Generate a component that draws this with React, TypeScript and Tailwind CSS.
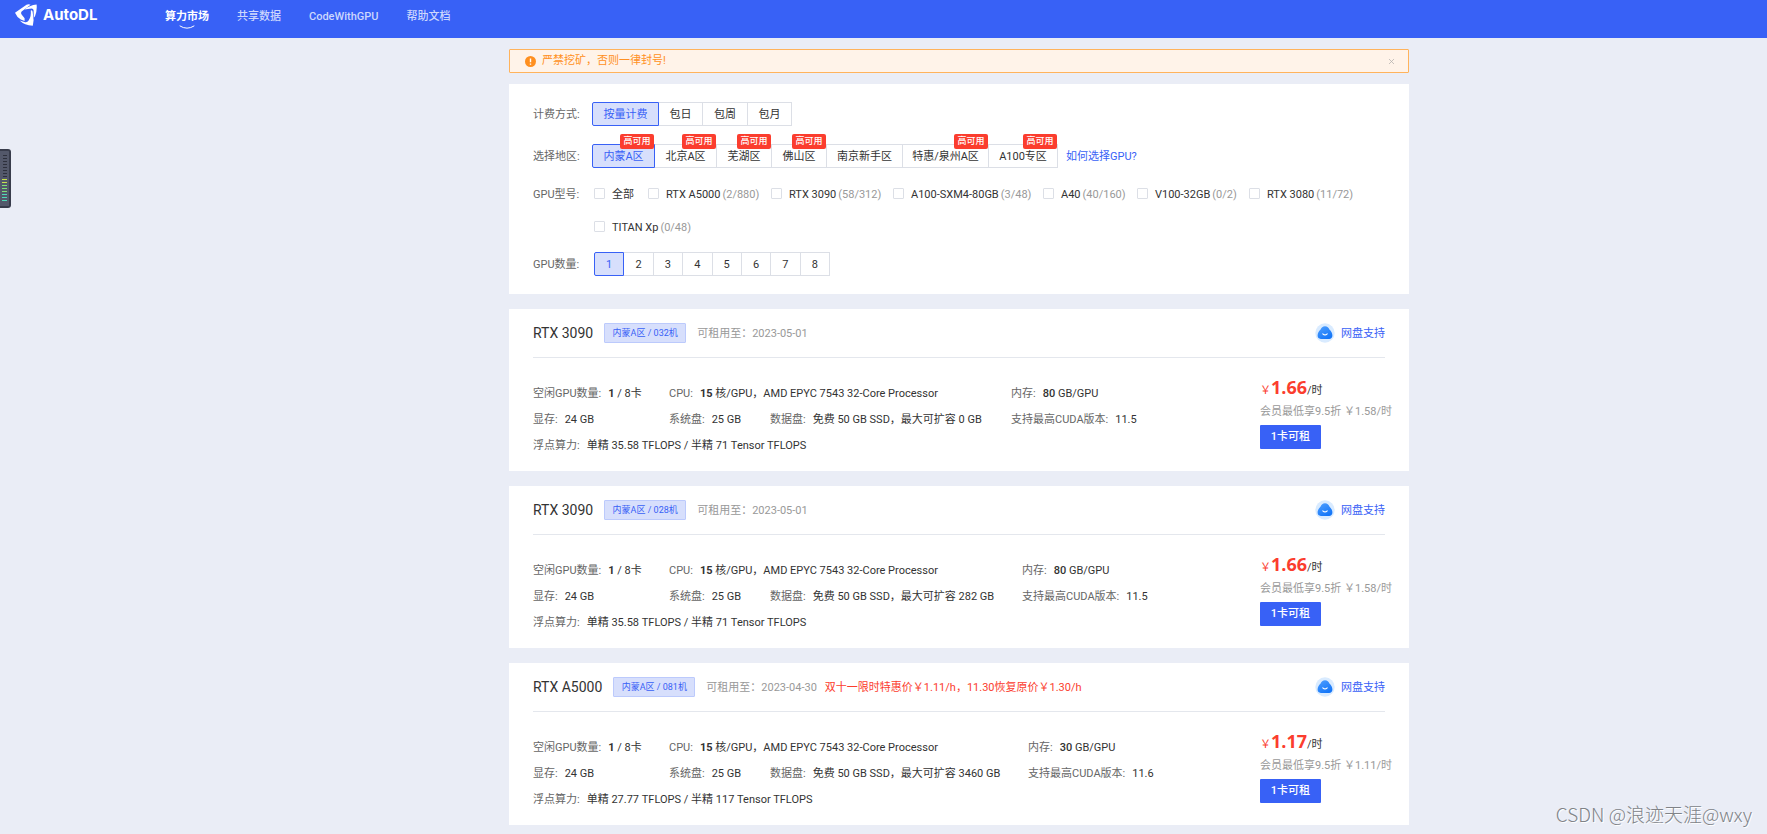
import { useState } from "react"
import { X } from "lucide-react"

const navItems = [
  { label: "算力市场", href: "#market", active: true },
  { label: "共享数据", href: "#data" },
  { label: "CodeWithGPU", href: "#code" },
  { label: "帮助文档", href: "#docs" },
]

const billingModes = [
  { label: "按量计费", width: "w-[67px]" },
  { label: "包日", width: "w-[44px]" },
  { label: "包周", width: "w-[45px]" },
  { label: "包月", width: "w-[44px]" },
]

const regions = [
  { label: "内蒙A区", width: "w-[63px]", hot: true },
  { label: "北京A区", width: "w-[62px]", hot: true },
  { label: "芜湖区", width: "w-[55px]", hot: true },
  { label: "佛山区", width: "w-[55px]", hot: true },
  { label: "南京新手区", width: "w-[76px]" },
  { label: "特惠/泉州A区", width: "w-[86px]", hot: true },
  { label: "A100专区", width: "w-[69px]", hot: true },
]

const gpuModels = [
  { label: "全部", count: "", width: "w-[54px]" },
  { label: "RTX A5000", count: "(2/880)", width: "w-[123px]" },
  { label: "RTX 3090", count: "(58/312)", width: "w-[122px]" },
  { label: "A100-SXM4-80GB", count: "(3/48)", width: "w-[150px]" },
  { label: "A40", count: "(40/160)", width: "w-[94px]" },
  { label: "V100-32GB", count: "(0/2)", width: "w-[112px]" },
  { label: "RTX 3080", count: "(11/72)", width: "w-[112px]" },
  { label: "TITAN Xp", count: "(0/48)", width: "w-[112px]" },
]

const machines = [
  {
    gpu: "RTX 3090",
    host: "内蒙A区 / 032机",
    until: "2023-05-01",
    promo: "",
    cpuCol: "w-[342px]",
    memory: "80",
    disk: "0 GB",
    cuda: "11.5",
    single: "35.58",
    half: "71",
    price: "1.66",
    member: "1.58",
  },
  {
    gpu: "RTX 3090",
    host: "内蒙A区 / 028机",
    until: "2023-05-01",
    promo: "",
    cpuCol: "w-[353px]",
    memory: "80",
    disk: "282 GB",
    cuda: "11.5",
    single: "35.58",
    half: "71",
    price: "1.66",
    member: "1.58",
  },
  {
    gpu: "RTX A5000",
    host: "内蒙A区 / 081机",
    until: "2023-04-30",
    promo: "双十一限时特惠价￥1.11/h，11.30恢复原价￥1.30/h",
    cpuCol: "w-[359px]",
    memory: "30",
    disk: "3460 GB",
    cuda: "11.6",
    single: "27.77",
    half: "117",
    price: "1.17",
    member: "1.11",
  },
]

type Machine = (typeof machines)[number]

function Logo() {
  return (
    <a href="#home" className="flex w-[150px] shrink-0 items-center gap-[6px] text-white">
      <svg width="22" height="22" viewBox="0 0 22 22" fill="#fff">
        <path d="M0 8.8 11.5 0.8Q13.4 0 15.6 0.7L6.6 7.6Q5.4 9 6.6 10.6L9.6 14.2V17L5.8 15.6Q2 13.4 0 8.8Z" />
        <path d="M9.4 5.4Q14.5 1.2 21.6 0.4 22.3 6.5 20 12.2L18.8 13.8 18.6 6.2Q18.4 4.4 16.6 4.4Z" />
        <path d="M15.8 6.4Q17.6 6 17.7 8L18.6 16.2 17.8 21.8Q9.5 21.5 4.6 16.6L10.2 18.2Q12.4 18.6 13.6 16.6 16.4 12.4 15.8 6.4Z" />
      </svg>
      <span className="font-[Inter,sans-serif] text-[15px] leading-[22px] font-bold">AutoDL</span>
    </a>
  )
}

function Options({ items, selected, onSelect, name }: {
  items: { label: string; width: string; hot?: boolean }[]
  selected: string
  onSelect: (label: string) => void
  name: string
}) {
  return (
    <div className="flex" role="group" aria-label={name}>
      {items.map((item) => (
        <button
          key={item.label}
          onClick={() => onSelect(item.label)}
          aria-pressed={item.label === selected}
          className={`relative h-6 shrink-0 border pt-[2px] whitespace-nowrap ${item.width} ${
            item.label === selected
              ? "rounded-l-[2px] border-[#3861f6] bg-[#d7dffc] text-[#3861f6]"
              : "border-l-0 border-[#dcdfe6] bg-white text-[#333]"
          }`}
        >
          {item.label}
          {item.hot && (
            <span className="absolute -top-[11px] right-0 z-10 h-[15px] w-[34px] rounded-[2px] bg-[#fb3d2e] text-[9px] leading-[15px] font-medium text-white">
              高可用
            </span>
          )}
        </button>
      ))}
    </div>
  )
}

function Field({ label, children }: { label: string; children: React.ReactNode }) {
  return (
    <span className="whitespace-nowrap text-[#333]">
      <span className="mr-[7px] text-[#666]">{label}:</span>
      {children}
    </span>
  )
}

function DiskIcon() {
  return (
    <svg width="20" height="20" viewBox="0 0 20 20">
      <defs>
        <linearGradient id="disk" x1="0" y1="0" x2="0.6" y2="1">
          <stop offset="0" stopColor="#4fa0ff" />
          <stop offset="1" stopColor="#1677f8" />
        </linearGradient>
      </defs>
      <circle cx="10" cy="10" r="9.7" fill="#d9ebff" />
      <path
        d="M10 3.2c2.2 0 3.8 1.4 4.4 3.4 1.8 1.8 3 3.6 3 5.9 0 2.2-1.4 3.4-3.2 3.4H5.8c-1.9 0-3.2-1.2-3.2-3.3 0-2.4 1.2-4.2 3-6 .7-2 2.2-3.4 4.4-3.4Z"
        fill="url(#disk)"
      />
      <path d="M7.8 10.8q2.2 2.2 4.4 0" stroke="#fff" strokeWidth="1.1" fill="none" strokeLinecap="round" />
    </svg>
  )
}

function MachineCard({ machine }: { machine: Machine }) {
  return (
    <article className="bg-white px-6 pb-3">
      <header className="flex h-[49px] items-center border-b border-[#e4e7ed]">
        <h2 className="mr-[11px] text-[14px]">{machine.gpu}</h2>
        <span className="mr-[11px] h-5 w-[82px] rounded-[1px] border border-[#bccafc] bg-[#d7dffc] text-center text-[9px] leading-[18px] text-[#3861f6]">
          {machine.host}
        </span>
        <span className="pt-[2px] text-[#999]">可租用至：{machine.until}</span>
        {machine.promo && <span className="ml-2 pt-[2px] text-[#fb3d2e]">{machine.promo}</span>}
        <a href="#disk" className="ml-auto flex items-center gap-[6px] text-[#3861f6]">
          <DiskIcon />
          <span className="pt-[2px]">网盘支持</span>
        </a>
      </header>

      <div className="flex pt-[17px]">
        <div className="flex-1 pt-[6px] leading-[26px]">
          <div className="flex">
            <div className="w-[136px]">
              <Field label="空闲GPU数量"><b>1</b> / 8卡</Field>
            </div>
            <div className={machine.cpuCol}>
              <Field label="CPU"><b>15</b> 核/GPU，AMD EPYC 7543 32-Core Processor</Field>
            </div>
            <Field label="内存"><b className="font-medium">{machine.memory}</b> GB/GPU</Field>
          </div>
          <div className="flex">
            <div className="w-[136px]">
              <Field label="显存">24 GB</Field>
            </div>
            <div className={`flex ${machine.cpuCol}`}>
              <div className="w-[101px]">
                <Field label="系统盘">25 GB</Field>
              </div>
              <Field label="数据盘">免费 50 GB SSD，最大可扩容 {machine.disk}</Field>
            </div>
            <Field label="支持最高CUDA版本">{machine.cuda}</Field>
          </div>
          <Field label="浮点算力">
            单精 {machine.single} TFLOPS / 半精 {machine.half} Tensor TFLOPS
          </Field>
        </div>

        <div className="w-[125px] shrink-0 whitespace-nowrap">
          <p className="flex h-[27px] items-baseline leading-6 text-[#333]">
            <span className="text-[#fb3d2e]">￥</span>
            <strong className="font-['Open_Sans',sans-serif] text-[18px] text-[#fb3d2e]">{machine.price}</strong>
            /时
          </p>
          <p className="leading-5 text-[#999]">会员最低享9.5折 ￥{machine.member}/时</p>
          <button className="mt-[3px] h-6 w-[61px] rounded-[1px] bg-[#3861f6] font-medium text-white">1卡可租</button>
        </div>
      </div>
    </article>
  )
}

export default function App() {
  const [billing, setBilling] = useState("按量计费")
  const [region, setRegion] = useState("内蒙A区")
  const [count, setCount] = useState(1)
  const [showNotice, setShowNotice] = useState(true)

  return (
    <div className="min-h-screen bg-[#eaedf6] font-[Roboto,'Noto_Sans_CJK_SC',sans-serif] text-[11px] leading-4 text-[#333]">
      <header className="flex h-[38px] items-start bg-[#3861f6] pt-1 pl-[15px]">
        <Logo />
        <nav className="flex gap-7 pt-[5px]">
          {navItems.map((item) => (
            <a
              key={item.href}
              href={item.href}
              className={`flex flex-col items-center ${item.active ? "font-bold text-white" : "font-medium text-[#cdd7fd]"}`}
            >
              {item.label}
              {item.active && (
                <svg width="16" height="5" viewBox="0 0 16 5" fill="none" stroke="#fff">
                  <path d="M1 1q7 4.5 14 0" strokeLinecap="round" />
                </svg>
              )}
            </a>
          ))}
        </nav>
      </header>

      <div className="pl-[151px]">
        <main className="mx-auto flex w-full max-w-[900px] flex-col pt-[11px] pb-2">
          {showNotice && (
            <div className="mb-[11px] flex h-6 items-center rounded-[1px] border border-[#ffb35c] bg-[#fff3e9] pr-3 pl-[15px] text-[#ff9022]">
              <svg width="11" height="11" viewBox="0 0 11 11" className="mr-[6px]">
                <circle cx="5.5" cy="5.5" r="5.5" fill="#ff8f1f" />
                <path d="M5.5 2.4v3.8M5.5 7.6v1.2" stroke="#fff" strokeWidth="1.4" />
              </svg>
              严禁挖矿，否则一律封号!
              <button onClick={() => setShowNotice(false)} aria-label="关闭" className="ml-auto text-[#b4b0ad]">
                <X size={9} />
              </button>
            </div>
          )}

          <section className="mb-[15px] bg-white px-6 py-[18px]">
            <div className="flex items-center">
              <span className="w-[59px] pt-[2px] text-[#666]">计费方式:</span>
              <Options name="计费方式" items={billingModes} selected={billing} onSelect={setBilling} />
            </div>
            <div className="mt-[18px] flex items-center">
              <span className="w-[59px] pt-[2px] text-[#666]">选择地区:</span>
              <Options name="选择地区" items={regions} selected={region} onSelect={setRegion} />
              <a href="#guide" className="ml-2 pt-[2px] text-[#3861f6]">如何选择GPU?</a>
            </div>
            <div className="mt-[9px] flex">
              <span className="w-[61px] shrink-0 pt-px leading-[33px] text-[#666]">GPU型号:</span>
              <div className="flex flex-wrap">
                {gpuModels.map((model) => (
                  <label key={model.label} className={`flex h-[33px] items-center whitespace-nowrap ${model.width}`}>
                    <input
                      type="checkbox"
                      className="mr-[7px] h-[11px] w-[11px] shrink-0 appearance-none rounded-[1px] border border-[#dcdfe6] bg-white checked:bg-[#3861f6]"
                    />
                    <span className="pt-[2px]">{model.label}</span>
                    <span className="ml-[2px] pt-[2px] text-[#999]">{model.count}</span>
                  </label>
                ))}
              </div>
            </div>
            <div className="mt-[9px] flex items-center">
              <span className="w-[61px] pt-[2px] text-[#666]">GPU数量:</span>
              <div className="flex w-[236px]" role="group" aria-label="GPU数量">
                {[1, 2, 3, 4, 5, 6, 7, 8].map((n) => (
                  <button
                    key={n}
                    onClick={() => setCount(n)}
                    aria-pressed={n === count}
                    className={`h-6 flex-1 border pt-[2px] ${
                      n === count
                        ? "rounded-l-[2px] border-[#3861f6] bg-[#d7dffc] text-[#3861f6]"
                        : "border-l-0 border-[#dcdfe6] bg-white text-[#333]"
                    }`}
                  >
                    {n}
                  </button>
                ))}
              </div>
            </div>
          </section>

          <div className="flex flex-col gap-[15px]">
            {machines.map((machine) => (
              <MachineCard key={machine.host} machine={machine} />
            ))}
          </div>
        </main>
      </div>

      {/* Recorder handle docked to the window edge */}
      <div className="absolute top-[149px] left-0 flex h-[59px] w-[11px] flex-col items-center justify-center rounded-r-[3px] border-2 border-l-0 border-[#383c4b] bg-[#53586a]">
        <svg width="5" height="47" viewBox="0 0 5 47">
          {Array.from({ length: 16 }, (_, i) => (
            <rect
              key={i}
              x={i < 8 ? 1 : 0}
              y={i * 3}
              width={i < 8 ? 4 : 5}
              height="1"
              fill={i < 8 ? "#2d303c" : i < 10 ? "#c6e04c" : i < 13 ? "#7fe07a" : "#4fd9b8"}
            />
          ))}
        </svg>
      </div>

      <div className="absolute right-[15px] bottom-2 font-['Noto_Sans_CJK_SC',sans-serif] text-[19px] leading-6 font-light text-[#808388] [text-shadow:1px_1px_0_#fff]">
        CSDN @浪迹天涯@wxy
      </div>
    </div>
  )
}
